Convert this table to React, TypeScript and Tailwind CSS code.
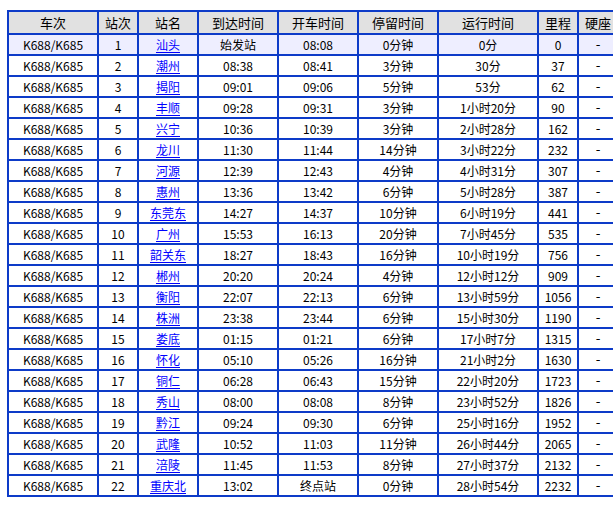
type Stop = {
  name: string;
  arrive: string;
  depart: string;
  stay: string;
  run: string;
  km: string;
};

const stops: Stop[] = [
  { name: '汕头', arrive: '始发站', depart: '08:08', stay: '0分钟', run: '0分', km: '0' },
  { name: '潮州', arrive: '08:38', depart: '08:41', stay: '3分钟', run: '30分', km: '37' },
  { name: '揭阳', arrive: '09:01', depart: '09:06', stay: '5分钟', run: '53分', km: '62' },
  { name: '丰顺', arrive: '09:28', depart: '09:31', stay: '3分钟', run: '1小时20分', km: '90' },
  { name: '兴宁', arrive: '10:36', depart: '10:39', stay: '3分钟', run: '2小时28分', km: '162' },
  { name: '龙川', arrive: '11:30', depart: '11:44', stay: '14分钟', run: '3小时22分', km: '232' },
  { name: '河源', arrive: '12:39', depart: '12:43', stay: '4分钟', run: '4小时31分', km: '307' },
  { name: '惠州', arrive: '13:36', depart: '13:42', stay: '6分钟', run: '5小时28分', km: '387' },
  { name: '东莞东', arrive: '14:27', depart: '14:37', stay: '10分钟', run: '6小时19分', km: '441' },
  { name: '广州', arrive: '15:53', depart: '16:13', stay: '20分钟', run: '7小时45分', km: '535' },
  { name: '韶关东', arrive: '18:27', depart: '18:43', stay: '16分钟', run: '10小时19分', km: '756' },
  { name: '郴州', arrive: '20:20', depart: '20:24', stay: '4分钟', run: '12小时12分', km: '909' },
  { name: '衡阳', arrive: '22:07', depart: '22:13', stay: '6分钟', run: '13小时59分', km: '1056' },
  { name: '株洲', arrive: '23:38', depart: '23:44', stay: '6分钟', run: '15小时30分', km: '1190' },
  { name: '娄底', arrive: '01:15', depart: '01:21', stay: '6分钟', run: '17小时7分', km: '1315' },
  { name: '怀化', arrive: '05:10', depart: '05:26', stay: '16分钟', run: '21小时2分', km: '1630' },
  { name: '铜仁', arrive: '06:28', depart: '06:43', stay: '15分钟', run: '22小时20分', km: '1723' },
  { name: '秀山', arrive: '08:00', depart: '08:08', stay: '8分钟', run: '23小时52分', km: '1826' },
  { name: '黔江', arrive: '09:24', depart: '09:30', stay: '6分钟', run: '25小时16分', km: '1952' },
  { name: '武隆', arrive: '10:52', depart: '11:03', stay: '11分钟', run: '26小时44分', km: '2065' },
  { name: '涪陵', arrive: '11:45', depart: '11:53', stay: '8分钟', run: '27小时37分', km: '2132' },
  { name: '重庆北', arrive: '13:02', depart: '终点站', stay: '0分钟', run: '28小时54分', km: '2232' },
];

const headers = ['车次', '站次', '站名', '到达时间', '开车时间', '停留时间', '运行时间', '里程', '硬座'];

export default function App() {
  return (
    <div className="w-[613px] h-[507px] overflow-hidden bg-white font-['Noto_Sans_CJK_SC',sans-serif] text-[12px] text-black">
      <div className="ml-[7px] mt-[10px] w-[612px] grid grid-cols-[88px_38px_58px_78px_78px_78px_98px_38px_38px] gap-[2px] p-[2px] bg-[#0d3bc8]">
        {headers.map((h) => (
          <div key={h} className="h-[21px] flex items-center justify-center bg-[#e1e1e1] text-[13px] leading-none">
            {h}
          </div>
        ))}
        {stops.map((s, i) => {
          const bg = i === 0 ? 'bg-[#eeeeff]' : 'bg-white';
          const cells = ['K688/K685', String(i + 1), s.name, s.arrive, s.depart, s.stay, s.run, s.km, '-'];
          return cells.map((c, j) => (
            <div key={i + '-' + j} className={`h-[19px] flex items-center justify-center leading-none ${bg}`}>
              {j === 2 ? (
                <a href="#" className="text-[#0000ff] underline underline-offset-2">
                  {c}
                </a>
              ) : j === 8 ? (
                <span className="font-['DejaVu_Sans',sans-serif] text-[13px]">{c}</span>
              ) : (
                c
              )}
            </div>
          ));
        })}
      </div>
    </div>
  );
}
